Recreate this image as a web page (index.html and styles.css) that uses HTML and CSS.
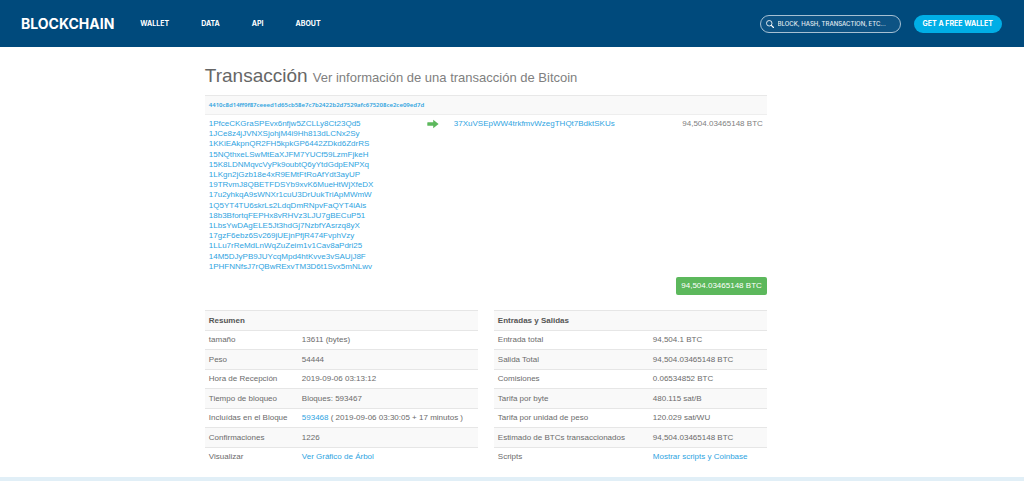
FILE: index.html
```html
<!DOCTYPE html>
<html lang="es">
<head>
<meta charset="utf-8">
<meta name="viewport" content="width=device-width, initial-scale=1">
<title>Transacción de Bitcoin</title>
<link rel="stylesheet" href="styles.css">
</head>
<body>
<header class="topbar">
  <a class="logo" href="#">BLOCKCHAIN</a>
  <nav class="nav">
    <a href="#">WALLET</a>
    <a href="#">DATA</a>
    <a href="#">API</a>
    <a href="#">ABOUT</a>
  </nav>
  <form class="search">
    <svg class="search-icon" viewBox="0 0 16 16" aria-hidden="true"><circle cx="6.5" cy="6.5" r="5.5" fill="none" stroke="currentColor" stroke-width="1.7"/><path d="M10.6 10.6L15 15" stroke="currentColor" stroke-width="2.4" stroke-linecap="round"/></svg>
    <input type="text" aria-label="Search" placeholder="BLOCK, HASH, TRANSACTION, ETC...">
  </form>
  <button class="wallet-button" type="button">GET A FREE WALLET</button>
</header>
<main class="content">
  <h1 class="title">Transacción <small>Ver información de una transacción de Bitcoin</small></h1>
  <section class="transaction">
    <div class="hash"><a href="#">4410c8d14ff9f87ceeed1d65cb58e7c7b2422b2d7529afc675208ce2ce09ed7d</a></div>
    <div class="flow">
      <ul class="inputs">
        <li><a href="#">1PfceCKGraSPEvx6nfjw5ZCLLy8Ct23Qd5</a></li>
        <li><a href="#">1JCe8z4jJVNXSjohjM4i9Hh813dLCNx2Sy</a></li>
        <li><a href="#">1KKiEAkpnQR2FH5kpkGP6442ZDkd6ZdrRS</a></li>
        <li><a href="#">15NQthxeLSwMtEaXJFM7YUCf59LzmFjkeH</a></li>
        <li><a href="#">15K8LDNMqvcVyPk9oubtQ6yYtdGdpENPXq</a></li>
        <li><a href="#">1LKgn2jGzb18e4xR9EMtFtRoAfYdt3ayUP</a></li>
        <li><a href="#">19TRvmJ8QBETFDSYb9xvK6MueHtWjXfeDX</a></li>
        <li><a href="#">17u2yhkqA9sWNXr1cuU3DrUukTriApMWmW</a></li>
        <li><a href="#">1Q5YT4TU6skrLs2LdqDmRNpvFaQYT4iAis</a></li>
        <li><a href="#">18b3BfortqFEPHx8vRHVz3LJU7gBECuP51</a></li>
        <li><a href="#">1LbsYwDAgELE5Jt3hdGj7NzbfYAsrzq8yX</a></li>
        <li><a href="#">17gzF6ebz6Sv269jUEjnPfjR474FvphVzy</a></li>
        <li><a href="#">1LLu7rReMdLnWqZuZeim1v1Cav8aPdri25</a></li>
        <li><a href="#">14M5DJyPB9JUYcqMpd4htKvve3vSAUjJ8F</a></li>
        <li><a href="#">1PHFNNfsJ7rQBwRExvTM3D6t1Svx5mNLwv</a></li>
      </ul>
      <svg class="arrow" viewBox="0 0 12 10" aria-hidden="true"><path d="M0.8 3.2h5.4V0.8L11.6 5 6.2 9.2V6.8H0.8Q0.3 6.8 0.3 6.3v-2.6Q0.3 3.2 0.8 3.2z" fill="#5cb85c"/></svg>
      <a class="output" href="#">37XuVSEpWW4trkfmvWzegTHQt7BdktSKUs</a>
      <span class="amount">94,504.03465148 BTC</span>
    </div>
    <div class="total"><button class="total-button" type="button">94,504.03465148 BTC</button></div>
  </section>
  <div class="details">
    <table class="summary">
      <colgroup><col class="label-column"><col></colgroup>
      <thead><tr><th colspan="2">Resumen</th></tr></thead>
      <tbody>
        <tr><td>tamaño</td><td>13611 (bytes)</td></tr>
        <tr><td>Peso</td><td>54444</td></tr>
        <tr><td>Hora de Recepción</td><td>2019-09-06 03:13:12</td></tr>
        <tr><td>Tiempo de bloqueo</td><td>Bloques: 593467</td></tr>
        <tr><td>Incluídas en el Bloque</td><td><a href="#">593468</a> ( 2019-09-06 03:30:05 + 17 minutos )</td></tr>
        <tr><td>Confirmaciones</td><td>1226</td></tr>
        <tr><td>Visualizar</td><td><a href="#">Ver Gráfico de Árbol</a></td></tr>
      </tbody>
    </table>
    <table class="summary">
      <colgroup><col class="wide-label-column"><col></colgroup>
      <thead><tr><th colspan="2">Entradas y Salidas</th></tr></thead>
      <tbody>
        <tr><td>Entrada total</td><td>94,504.1 BTC</td></tr>
        <tr><td>Salida Total</td><td>94,504.03465148 BTC</td></tr>
        <tr><td>Comisiones</td><td>0.06534852 BTC</td></tr>
        <tr><td>Tarifa por byte</td><td>480.115 sat/B</td></tr>
        <tr><td>Tarifa por unidad de peso</td><td>120.029 sat/WU</td></tr>
        <tr><td>Estimado de BTCs transaccionados</td><td>94,504.03465148 BTC</td></tr>
        <tr><td>Scripts</td><td><a href="#">Mostrar scripts y Coinbase</a></td></tr>
      </tbody>
    </table>
  </div>
</main>
<footer class="footer"></footer>
</body>
</html>
```
FILE: styles.css
```css
* {
  box-sizing: border-box;
}

body {
  margin: 0;
  background: #fff;
  color: #6b6b6b;
  font: 8px/10px "Liberation Sans", Arial, sans-serif;
}

a {
  color: #2fa4df;
  text-decoration: none;
}

.topbar {
  display: flex;
  align-items: center;
  min-height: 47px;
  padding: 0 22px 0 21px;
  background: #004a7c;
  color: #fff;
  font-family: Inter, sans-serif;
}

.topbar a {
  color: #fff;
}

.logo {
  font-size: 14px;
  line-height: 18px;
  font-weight: 700;
}

.nav {
  display: flex;
  gap: 32px;
  margin-left: 26px;
  font-size: 7px;
  font-weight: 700;
}

.search {
  display: flex;
  align-items: center;
  gap: 4px;
  width: 141px;
  height: 18px;
  margin-left: auto;
  padding: 0 5px;
  border: 1px solid #a6c0d3;
  border-radius: 9px;
  background: #0d5384;
}

.search-icon {
  flex: none;
  width: 8px;
  height: 8px;
}

.search input {
  flex: 1;
  min-width: 0;
  padding: 0;
  border: 0;
  outline: 0;
  background: transparent;
  color: #fff;
  font: 500 6px/10px Inter, sans-serif;
}

.search input::placeholder {
  color: #e3ecf2;
  opacity: 1;
}

.wallet-button {
  height: 18px;
  margin-left: 13px;
  padding: 0 9px;
  border: 0;
  border-radius: 9px;
  background: #00aee6;
  color: #fff;
  font: 700 7px/10px Inter, sans-serif;
}

.content {
  max-width: 562px;
  margin-left: 20%;
}

.title {
  margin: 0;
  padding: 17px 0 8px;
  color: #666;
  font-size: 19px;
  line-height: 23px;
  font-weight: 400;
}

.title small {
  color: #808080;
  font-size: 13px;
  line-height: 13px;
}

.hash {
  padding: 4px;
  border-top: 1px solid #e8e8e8;
  border-bottom: 1px solid #eee;
  background: #f9f9f9;
  font-family: "Noto Sans", sans-serif;
  font-size: 6px;
  font-weight: 600;
}

.flow {
  display: grid;
  grid-template-columns: 218px 27px 1fr auto;
  padding: 4px 4px 5px;
}

.inputs {
  display: flex;
  flex-direction: column;
  justify-content: space-between;
  min-height: 153px;
  margin: 0;
  padding: 0;
  list-style: none;
}

.arrow {
  width: 12px;
  height: 10px;
}

.amount {
  color: #808080;
}

.total {
  display: flex;
  justify-content: flex-end;
}

.total-button {
  padding: 4px 5px;
  border: 0;
  border-radius: 2px;
  background: #5cb85c;
  color: #fff;
  font: 8px/10px "Liberation Sans", Arial, sans-serif;
}

.details {
  display: grid;
  grid-template-columns: 1fr 1fr;
  gap: 16px;
  padding: 15px 0 10px;
}

.summary {
  width: 100%;
  border-collapse: collapse;
  table-layout: fixed;
}

.label-column {
  width: 93px;
}

.wide-label-column {
  width: 155px;
}

.summary th,
.summary td {
  height: 19px;
  padding: 0 4px;
  border-top: 1px solid #e6e6e6;
  text-align: left;
}

.summary th,
.summary tr:nth-child(even) td {
  height: 20px;
  background: #f9f9f9;
}

.summary th {
  color: #555;
}

.footer {
  height: 4px;
  background: #e1eff7;
}
```
